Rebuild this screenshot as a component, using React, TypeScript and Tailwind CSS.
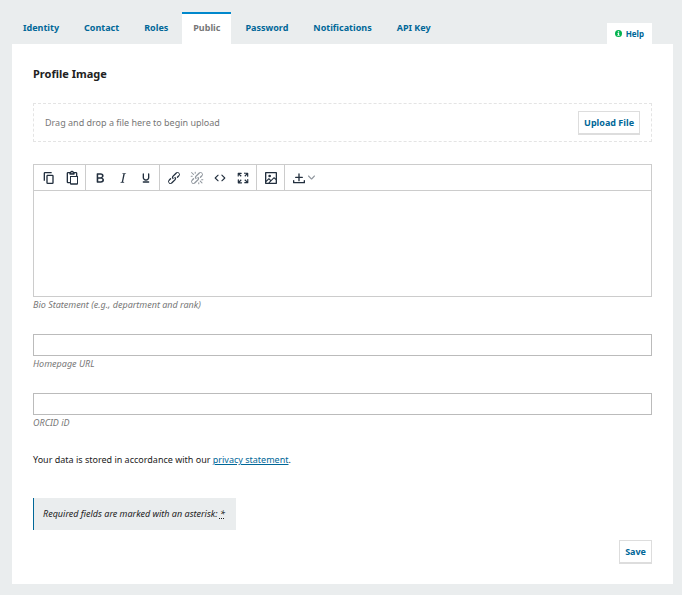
import type { ReactNode } from 'react';

const tabs = ['Identity', 'Contact', 'Roles', 'Public', 'Password', 'Notifications', 'API Key'];

const LINK =
  'M6.2 12.3a1 1 0 0 1 1.4 1.4l-2 2a2 2 0 1 0 2.6 2.8l4.8-4.8a1 1 0 0 0 0-1.4 1 1 0 1 1 1.4-1.3 2.9 2.9 0 0 1 0 4L9.6 20a3.9 3.9 0 0 1-5.5-5.5l2-2Zm11.6-.6a1 1 0 0 1-1.4-1.4l2-2a2 2 0 1 0-2.6-2.8L11 10.3a1 1 0 0 0 0 1.4A1 1 0 1 1 9.6 13a2.9 2.9 0 0 1 0-4L14.4 4a3.9 3.9 0 0 1 5.5 5.5l-2 2Z';

const toolbar = [
  [
    {
      label: 'Copy',
      d: 'M16 3H6a2 2 0 0 0-2 2v11h2V5h10V3Zm1 4a2 2 0 0 1 2 2v10a2 2 0 0 1-2 2h-7a2 2 0 0 1-2-2V9c0-1.1.9-2 2-2h7Zm0 12V9h-7v10h7Z',
    },
    {
      label: 'Paste',
      d: 'M18 9V5h-2v1c0 .6-.4 1-1 1H9a1 1 0 0 1-1-1V5H6v13h3V9h9ZM9 20H6a2 2 0 0 1-2-2V5c0-1.1.9-2 2-2h3.2A3 3 0 0 1 12 1a3 3 0 0 1 2.8 2H18a2 2 0 0 1 2 2v4h1v12l-1 1H10l-1-1v-1Zm1.5-9.5v9.4h9v-9.4h-9ZM12 3a1 1 0 0 0-1 1c0 .5.4 1 1 1s1-.5 1-1-.4-1-1-1Z',
    },
  ],
  [
    {
      label: 'Bold',
      d: 'M7.8 19c-.3 0-.5 0-.6-.2l-.2-.5V5.7c0-.2 0-.4.2-.5l.6-.2h5c1.5 0 2.7.3 3.5 1 .7.6 1.1 1.4 1.1 2.5a3 3 0 0 1-.6 1.9c-.4.6-1 1-1.6 1.2.4.1.9.3 1.3.6s.8.7 1 1.2c.4.4.5 1 .5 1.6 0 1.3-.4 2.3-1.3 3-.8.7-2.1 1-3.8 1H7.8Zm5-8.3c.6 0 1.2-.1 1.6-.5.4-.3.6-.7.6-1.3 0-1.1-.8-1.7-2.3-1.7H9.3v3.5h3.4Zm.5 6c.7 0 1.3-.1 1.7-.4.4-.4.6-.9.6-1.5s-.2-1-.7-1.4c-.4-.3-1-.4-2-.4H9.4v3.8h4Z',
    },
    {
      label: 'Italic',
      d: 'm16.7 4.7-.1.9h-.3c-.6 0-1 0-1.4.3-.3.3-.4.6-.5 1.1l-2.1 9.8v.6c0 .5.4.8 1.4.8h.2l-.2.8H8l.2-.8h.2c1.1 0 1.8-.5 2-1.5l2-9.8.1-.5c0-.6-.4-.8-1.4-.8h-.3l.2-.9h5.8Z',
    },
    {
      label: 'Underline',
      d: 'M16 5c.6 0 1 .4 1 1v5.5a4 4 0 0 1-.4 1.8l-1 1.4a5.3 5.3 0 0 1-5.5 1 5 5 0 0 1-1.6-1c-.5-.4-.8-.9-1.1-1.4a4 4 0 0 1-.4-1.8V6c0-.6.4-1 1-1s1 .4 1 1v5.5c0 .3 0 .6.2 1l.6.7a3.3 3.3 0 0 0 2.2.8 3.4 3.4 0 0 0 2.2-.8c.3-.2.4-.5.6-.8l.2-.9V6c0-.6.4-1 1-1ZM8 17h8c.6 0 1 .4 1 1s-.4 1-1 1H8a1 1 0 0 1 0-2Z',
    },
  ],
  [
    { label: 'Insert link', d: LINK },
    {
      label: 'Remove link',
      disabled: true,
      d: `${LINK}M7.6 6.3a.8.8 0 0 1-1 1.1L3.3 4.2a.7.7 0 1 1 1-1l3.2 3.1ZM5.1 8.6a.8.8 0 0 1 0 1.5H3a.8.8 0 0 1 0-1.5H5Zm5-3.5a.8.8 0 0 1-1.5 0V3a.8.8 0 0 1 1.5 0V5Zm6 11.8a.8.8 0 0 1 1-1l3.2 3.2a.8.8 0 0 1-1 1L16 17Zm-2.2 2a.8.8 0 0 1 1.5 0V21a.8.8 0 0 1-1.5 0V19Zm5-3.5a.7.7 0 1 1 0-1.5H21a.8.8 0 0 1 0 1.5H19Z`,
    },
    {
      label: 'Source code',
      d: 'M9.8 15.7c.3.3.3.8 0 1-.3.4-.9.4-1.2 0l-4.4-4.1a.8.8 0 0 1 0-1.2l4.4-4.2c.3-.3.9-.3 1.2 0 .3.3.3.8 0 1.1L6 12l3.8 3.7ZM14.2 15.7c-.3.3-.3.8 0 1 .4.4.9.4 1.2 0l4.4-4.1c.3-.3.3-.9 0-1.2l-4.4-4.2a.8.8 0 0 0-1.2 0c-.3.3-.3.8 0 1.1L18 12l-3.8 3.7Z',
    },
    {
      label: 'Fullscreen',
      d: 'm15.3 10-1.2-1.3 2.9-3h-2.3a.9.9 0 1 1 0-1.7H19c.5 0 .9.4.9.9v4.4a.9.9 0 1 1-1.8 0V7l-2.9 3Zm0 4 3 3v-2.3a.9.9 0 1 1 1.7 0V19c0 .5-.4.9-.9.9h-4.4a.9.9 0 1 1 0-1.8H17l-3-2.9 1.3-1.2ZM10 15.4l-2.9 3h2.3a.9.9 0 1 1 0 1.7H5a.9.9 0 0 1-.9-.9v-4.4a.9.9 0 1 1 1.8 0V17l2.9-3 1.2 1.3ZM8.7 10 5.7 7v2.3a.9.9 0 0 1-1.7 0V5c0-.5.4-.9.9-.9h4.4a.9.9 0 0 1 0 1.8H7l3 2.9-1.3 1.2Z',
    },
  ],
  [
    {
      label: 'Insert image',
      d: 'm5 15.7 3.3-3.2c.3-.3.7-.3 1 0L12 15l4.1-4c.3-.4.8-.4 1 0l2 1.9V5H5v10.7ZM5 18v1h3l2.8-2.9-2-2L5 17.9Zm14-3-2.5-2.4-6.4 6.5H19v-4ZM4 3h16c.6 0 1 .4 1 1v16c0 .6-.4 1-1 1H4a1 1 0 0 1-1-1V4c0-.6.4-1 1-1Zm6 8a2 2 0 1 0 0-4 2 2 0 0 0 0 4Z',
    },
  ],
];

function Icon({ d }: { d: string }) {
  return (
    <svg viewBox="0 0 24 24" className="size-4" fill="currentColor" fillRule="evenodd" aria-hidden="true">
      <path d={d} />
    </svg>
  );
}

function OutlineButton({ children }: { children: ReactNode }) {
  return (
    <button
      type="button"
      className="h-[23px] border border-[#ddd] bg-white px-[5px] text-[9px] font-bold text-[#006798] shadow-[0_1px_0_#ddd]"
    >
      {children}
    </button>
  );
}

function TextField({ id, label }: { id: string; label: string }) {
  return (
    <div className="mt-[22px]">
      <input id={id} type="text" className="block h-[22px] w-full border border-[#bbb] bg-white px-2 text-[9px]" />
      <label htmlFor={id} className="block text-[9px] leading-[15px] text-[#777] italic">
        {label}
      </label>
    </div>
  );
}

function Editor() {
  return (
    <div className="mt-[22px]">
      <div className="border border-[#ccc]">
        <div className="flex h-[26px] border-b border-[#ccc] pl-px text-[#222f3e]">
          {toolbar.map((group) => (
            <div key={group[0].label} className="flex border-r border-[#ccc] px-[2px]">
              {group.map((item) => (
                <button
                  key={item.label}
                  type="button"
                  aria-label={item.label}
                  className={
                    'disabled' in item
                      ? 'grid w-[23px] place-items-center opacity-50'
                      : 'grid w-[23px] place-items-center'
                  }
                >
                  <Icon d={item.d} />
                </button>
              ))}
            </div>
          ))}
          <button type="button" aria-label="Upload" className="flex items-center gap-px px-[6px]">
            <Icon d="M11 6a1 1 0 0 1 2 0v4h4a1 1 0 0 1 0 2h-4v4a1 1 0 0 1-2 0v-4H7a1 1 0 0 1 0-2h4V6ZM3 16a1 1 0 0 1 2 0v2h14v-2a1 1 0 0 1 2 0v3a1 1 0 0 1-1 1H4a1 1 0 0 1-1-1v-3Z" />
            <svg viewBox="0 0 10 10" className="size-[7px] opacity-50" fill="currentColor" aria-hidden="true">
              <path d="M8.7 2.2c.3-.3.8-.3 1 0 .4.4.4.9 0 1.2L5.7 7.8c-.3.3-.9.3-1.2 0L.2 3.4a.8.8 0 0 1 0-1.2c.3-.3.8-.3 1.1 0L5 6l3.7-3.8Z" />
            </svg>
          </button>
        </div>
        <textarea id="bio" className="block h-[105px] w-full resize-none bg-white p-2 text-[9px] outline-none" />
      </div>
      <label htmlFor="bio" className="block text-[9px] leading-[15px] text-[#777] italic">
        Bio Statement (e.g., department and rank)
      </label>
    </div>
  );
}

export default function App() {
  return (
    <div className="min-h-screen bg-[#eaedee] pt-3 pr-[9px] pb-[11px] pl-3 font-['Noto_Sans',sans-serif] text-[9px] text-[#222]">
      <nav className="flex gap-[3px]">
        {tabs.map((tab) => (
          <a
            key={tab}
            href="#"
            className={
              tab === 'Public'
                ? 'h-8 border-t-2 border-[#0088cc] bg-white px-[11px] leading-[28px] font-bold text-[#777]'
                : 'h-8 border-t-2 border-transparent px-[11px] leading-[28px] font-bold text-[#006798]'
            }
          >
            {tab}
          </a>
        ))}
        <button
          type="button"
          className="mt-auto mr-[21px] ml-auto flex h-[21px] items-center gap-1 bg-white px-[8px] text-[8px] font-bold text-[#006798]"
        >
          <svg viewBox="0 0 16 16" className="size-[7px]" aria-hidden="true">
            <circle cx="8" cy="8" r="8" fill="#00b24e" />
            <path d="M6.5 3h3v2.5h-3ZM5.5 6.8h4v4.4h1.2V13H5.3v-1.8h1.2V8.6h-1Z" fill="#fff" />
          </svg>
          Help
        </button>
      </nav>

      <main className="bg-white p-[21px]">
        <h1 className="text-[11px] leading-[18px] font-bold">Profile Image</h1>

        <div className="mt-5 flex h-[39px] items-center justify-between border border-dashed border-[#e4e4e4] px-[11px] text-[#777]">
          <span>Drag and drop a file here to begin upload</span>
          <OutlineButton>Upload File</OutlineButton>
        </div>

        <Editor />
        <TextField id="homepage" label="Homepage URL" />
        <TextField id="orcid" label="ORCID iD" />

        <p className="mt-[21px] leading-[18px]">
          Your data is stored in accordance with our{' '}
          <a href="#" className="text-[#006798] underline">
            privacy statement
          </a>
          .
        </p>

        <p className="mt-[29px] w-fit border-l border-[#006798] bg-[#eaedee] pr-[11px] pl-[9px] leading-8 italic">
          Required fields are marked with an asterisk:{' '}
          <abbr title="required" className="underline decoration-dotted">
            *
          </abbr>
        </p>

        <div className="mt-[10px] flex justify-end">
          <OutlineButton>Save</OutlineButton>
        </div>
      </main>
    </div>
  );
}
